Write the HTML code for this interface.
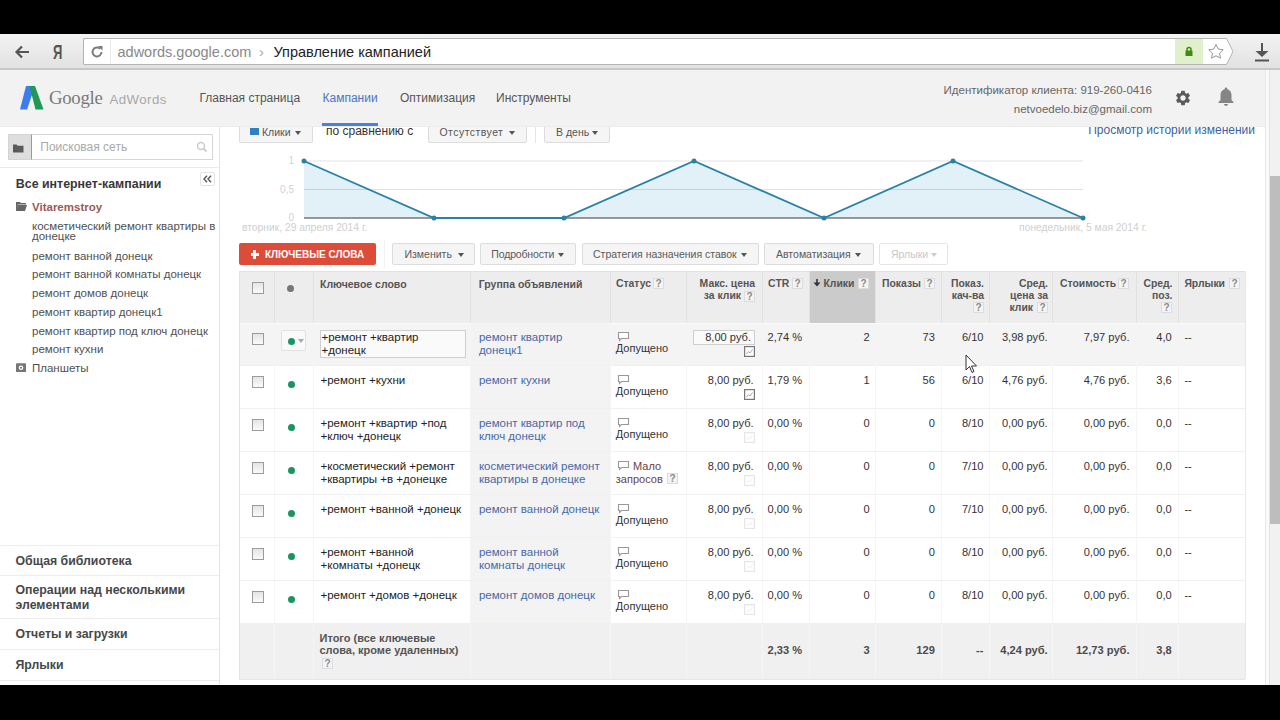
<!DOCTYPE html><html><head><meta charset="utf-8"><style>
html,body{margin:0;padding:0;width:1280px;height:720px;overflow:hidden;background:#fff;font-family:"Liberation Sans", sans-serif;}
.t{position:absolute;white-space:nowrap;}
.b{position:absolute;box-sizing:border-box;}
svg{position:absolute;}
</style></head><body>
<div class="b" style="left:0px;top:70px;width:1268px;height:615px;background:#fff;"></div>
<div class="b" style="left:239px;top:112px;width:74px;height:31px;background:#f5f5f5;border:1px solid #dcdcdc;border-radius:2px;"></div>
<div class="b" style="left:250px;top:128px;width:9px;height:7px;background:#2d82c4;"></div>
<div class="t" style="top:125.83px;font-size:10.5px;line-height:12.07px;color:#555;font-weight:normal;left:262.00px;">Клики</div>
<div class="b" style="left:295px;top:130.5px;width:0;height:0;border-left:3.5px solid transparent;border-right:3.5px solid transparent;border-top:4px solid #555;"></div>
<div class="t" style="top:125.44px;font-size:12px;line-height:13.8px;color:#333;font-weight:normal;left:326.00px;">по сравнению с</div>
<div class="b" style="left:428px;top:112px;width:99px;height:31px;background:#f5f5f5;border:1px solid #dcdcdc;border-radius:2px;"></div>
<div class="t" style="top:125.83px;font-size:10.5px;line-height:12.07px;color:#555;font-weight:normal;left:439.50px;letter-spacing:0.45px;">Отсутствует</div>
<div class="b" style="left:509px;top:130.5px;width:0;height:0;border-left:3.5px solid transparent;border-right:3.5px solid transparent;border-top:4px solid #555;"></div>
<div class="b" style="left:535px;top:112px;width:1px;height:31px;background:#e5e5e5;"></div>
<div class="b" style="left:544px;top:112px;width:66px;height:31px;background:#f5f5f5;border:1px solid #dcdcdc;border-radius:2px;"></div>
<div class="t" style="top:125.83px;font-size:10.5px;line-height:12.07px;color:#555;font-weight:normal;left:556.00px;">В день</div>
<div class="b" style="left:592.3px;top:130.5px;width:0;height:0;border-left:3.5px solid transparent;border-right:3.5px solid transparent;border-top:4px solid #555;"></div>
<div class="t" style="top:123.94px;font-size:12px;line-height:13.8px;color:#3c5fa0;font-weight:normal;right:25.00px;text-align:right;">Просмотр истории изменений</div>
<svg style="left:0;top:0" width="1280" height="720">
<polygon points="304,161 434,218 564,218 694,161 824,218 953,161 1083,218 304,218" fill="#e2f0f8"/>
<line x1="304" y1="161" x2="1083" y2="161" stroke="#000" stroke-opacity="0.11" stroke-width="1"/>
<line x1="304" y1="189.5" x2="1083" y2="189.5" stroke="#000" stroke-opacity="0.12" stroke-width="1.2"/>
<line x1="304" y1="218" x2="1083" y2="218" stroke="#777" stroke-width="1.5"/>
<polyline points="304,161 434,218 564,218 694,161 824,218 953,161 1083,218" fill="none" stroke="#2981a6" stroke-width="1.8"/>
<g fill="#2981a6"><circle cx="304" cy="161" r="2.5"/><circle cx="434" cy="218" r="2.5"/><circle cx="564" cy="218" r="2.5"/><circle cx="694" cy="161" r="2.5"/><circle cx="824" cy="218" r="2.5"/><circle cx="953" cy="161" r="2.5"/><circle cx="1083" cy="218" r="2.5"/></g>
</svg>
<div class="t" style="top:155.28px;font-size:10px;line-height:11.5px;color:#d2d2d2;font-weight:normal;right:986.00px;text-align:right;">1</div>
<div class="t" style="top:183.78px;font-size:10px;line-height:11.5px;color:#d2d2d2;font-weight:normal;right:986.00px;text-align:right;">0,5</div>
<div class="t" style="top:211.78px;font-size:10px;line-height:11.5px;color:#d2d2d2;font-weight:normal;right:986.00px;text-align:right;">0</div>
<div class="t" style="top:221.51px;font-size:10.3px;line-height:11.85px;color:#cfcfcf;font-weight:normal;left:242.00px;">вторник, 29 апреля 2014 г.</div>
<div class="t" style="top:221.51px;font-size:10.3px;line-height:11.85px;color:#cfcfcf;font-weight:normal;right:133.00px;text-align:right;">понедельник, 5 мая 2014 г.</div>
<div class="b" style="left:239px;top:243px;width:137px;height:22px;background:#dd4b39;border-radius:2px;"></div>
<div class="b" style="left:250.5px;top:253px;width:8.5px;height:3px;background:#fff;"></div>
<div class="b" style="left:253.25px;top:250.3px;width:3px;height:8.5px;background:#fff;"></div>
<div class="t" style="top:248.78px;font-size:10px;line-height:11.5px;color:#fff;font-weight:bold;left:265.00px;">КЛЮЧЕВЫЕ СЛОВА</div>
<div class="b" style="left:384px;top:240px;width:1px;height:28px;background:#f2f2f2;"></div>
<div class="b" style="left:392px;top:243px;width:83px;height:22px;background:#f5f5f5;border:1px solid #dcdcdc;border-radius:2px;"></div>
<div class="t" style="top:248.33px;font-size:10.5px;line-height:12.07px;color:#5a5a5a;font-weight:normal;left:404.50px;">Изменить</div>
<div class="b" style="left:457.5px;top:252.5px;width:0;height:0;border-left:3.5px solid transparent;border-right:3.5px solid transparent;border-top:4px solid #555;"></div>
<div class="b" style="left:480px;top:243px;width:96px;height:22px;background:#f5f5f5;border:1px solid #dcdcdc;border-radius:2px;"></div>
<div class="t" style="top:248.33px;font-size:10.5px;line-height:12.07px;color:#5a5a5a;font-weight:normal;left:491.30px;letter-spacing:-0.15px;">Подробности</div>
<div class="b" style="left:558px;top:252.5px;width:0;height:0;border-left:3.5px solid transparent;border-right:3.5px solid transparent;border-top:4px solid #555;"></div>
<div class="b" style="left:582px;top:243px;width:177px;height:22px;background:#f5f5f5;border:1px solid #dcdcdc;border-radius:2px;"></div>
<div class="t" style="top:248.33px;font-size:10.5px;line-height:12.07px;color:#5a5a5a;font-weight:normal;left:593.00px;">Стратегия назначения ставок</div>
<div class="b" style="left:740.8px;top:252.5px;width:0;height:0;border-left:3.5px solid transparent;border-right:3.5px solid transparent;border-top:4px solid #555;"></div>
<div class="b" style="left:764px;top:243px;width:110px;height:22px;background:#f5f5f5;border:1px solid #dcdcdc;border-radius:2px;"></div>
<div class="t" style="top:248.33px;font-size:10.5px;line-height:12.07px;color:#5a5a5a;font-weight:normal;left:776.00px;">Автоматизация</div>
<div class="b" style="left:855.3px;top:252.5px;width:0;height:0;border-left:3.5px solid transparent;border-right:3.5px solid transparent;border-top:4px solid #555;"></div>
<div class="b" style="left:879px;top:243px;width:69px;height:22px;background:#fff;border:1px solid #e5e5e5;border-radius:2px;"></div>
<div class="t" style="top:248.33px;font-size:10.5px;line-height:12.07px;color:#c8c8c8;font-weight:normal;left:891.00px;">Ярлыки</div>
<div class="b" style="left:930.5px;top:252.5px;width:0;height:0;border-left:3.5px solid transparent;border-right:3.5px solid transparent;border-top:4px solid #ccc;"></div>
<div class="b" style="left:239px;top:271px;width:1006px;height:52px;background:#ededed;border-top:1px solid #e2e2e2;"></div>
<div class="b" style="left:809px;top:271px;width:66px;height:52px;background:#cbcbcb;"></div>
<div class="b" style="left:274px;top:271px;width:1px;height:52px;background:#e2e2e2;"></div>
<div class="b" style="left:313px;top:271px;width:1px;height:52px;background:#e2e2e2;"></div>
<div class="b" style="left:470px;top:271px;width:1px;height:52px;background:#e2e2e2;"></div>
<div class="b" style="left:610px;top:271px;width:1px;height:52px;background:#e2e2e2;"></div>
<div class="b" style="left:686px;top:271px;width:1px;height:52px;background:#e2e2e2;"></div>
<div class="b" style="left:762px;top:271px;width:1px;height:52px;background:#e2e2e2;"></div>
<div class="b" style="left:809px;top:271px;width:1px;height:52px;background:#e2e2e2;"></div>
<div class="b" style="left:875px;top:271px;width:1px;height:52px;background:#e2e2e2;"></div>
<div class="b" style="left:941px;top:271px;width:1px;height:52px;background:#e2e2e2;"></div>
<div class="b" style="left:989px;top:271px;width:1px;height:52px;background:#e2e2e2;"></div>
<div class="b" style="left:1052px;top:271px;width:1px;height:52px;background:#e2e2e2;"></div>
<div class="b" style="left:1136px;top:271px;width:1px;height:52px;background:#e2e2e2;"></div>
<div class="b" style="left:1178px;top:271px;width:1px;height:52px;background:#e2e2e2;"></div>
<div class="b" style="left:239px;top:323px;width:1006px;height:356px;background:#fff;"></div>
<div class="b" style="left:239px;top:323px;width:1006px;height:43px;background:#f4f4f4;"></div>
<div class="b" style="left:239px;top:323px;width:1006px;height:1px;background:#fbfbfb;"></div>
<div class="b" style="left:470px;top:323px;width:140px;height:356px;background:#f3f3f3;"></div>
<div class="b" style="left:239px;top:624px;width:1006px;height:55px;background:#f0f0f0;"></div>
<div class="b" style="left:239px;top:365px;width:1006px;height:1px;background:#f0f0f0;"></div>
<div class="b" style="left:239px;top:408px;width:1006px;height:1px;background:#f0f0f0;"></div>
<div class="b" style="left:239px;top:451px;width:1006px;height:1px;background:#f0f0f0;"></div>
<div class="b" style="left:239px;top:494px;width:1006px;height:1px;background:#f0f0f0;"></div>
<div class="b" style="left:239px;top:537px;width:1006px;height:1px;background:#f0f0f0;"></div>
<div class="b" style="left:239px;top:580px;width:1006px;height:1px;background:#f0f0f0;"></div>
<div class="b" style="left:239px;top:623px;width:1006px;height:1px;background:#f0f0f0;"></div>
<div class="b" style="left:239px;top:679px;width:1006px;height:1px;background:#e6e6e6;"></div>
<div class="b" style="left:274px;top:323px;width:1px;height:356px;background:#f5f5f5;"></div>
<div class="b" style="left:313px;top:323px;width:1px;height:356px;background:#f5f5f5;"></div>
<div class="b" style="left:470px;top:323px;width:1px;height:356px;background:#f5f5f5;"></div>
<div class="b" style="left:610px;top:323px;width:1px;height:356px;background:#f5f5f5;"></div>
<div class="b" style="left:686px;top:323px;width:1px;height:356px;background:#f5f5f5;"></div>
<div class="b" style="left:762px;top:323px;width:1px;height:356px;background:#f5f5f5;"></div>
<div class="b" style="left:809px;top:323px;width:1px;height:356px;background:#f5f5f5;"></div>
<div class="b" style="left:875px;top:323px;width:1px;height:356px;background:#f5f5f5;"></div>
<div class="b" style="left:941px;top:323px;width:1px;height:356px;background:#f5f5f5;"></div>
<div class="b" style="left:989px;top:323px;width:1px;height:356px;background:#f5f5f5;"></div>
<div class="b" style="left:1052px;top:323px;width:1px;height:356px;background:#f5f5f5;"></div>
<div class="b" style="left:1136px;top:323px;width:1px;height:356px;background:#f5f5f5;"></div>
<div class="b" style="left:1178px;top:323px;width:1px;height:356px;background:#f5f5f5;"></div>
<div class="b" style="left:239px;top:271px;width:1px;height:408px;background:#e2e2e2;"></div>
<div class="b" style="left:1245px;top:271px;width:1px;height:408px;background:#e8e8e8;"></div>
<div class="b" style="left:252px;top:282px;width:12px;height:12px;border:1px solid #9c9c9c;background:linear-gradient(#e4e4e4,#fafafa);"></div>
<div class="b" style="left:286.5px;top:285px;width:7px;height:7px;border-radius:50%;background:#777;"></div>
<div class="t" style="top:278.33px;font-size:10.5px;line-height:12.07px;color:#555;font-weight:bold;left:320.00px;">Ключевое слово</div>
<div class="t" style="top:278.33px;font-size:10.5px;line-height:12.07px;color:#555;font-weight:bold;left:478.80px;">Группа объявлений</div>
<div class="t" style="top:278.42px;font-size:10.4px;line-height:11.96px;color:#555;font-weight:bold;left:616.00px;">Статус</div>
<div class="b" style="left:653px;top:278px;width:11px;height:11px;border:1px solid #dcdcdc;background:#f4f4f4;font-size:10px;line-height:10px;text-align:center;color:#8a8a8a;font-weight:bold;">?</div>
<div class="t" style="top:278.42px;font-size:10.4px;line-height:11.96px;color:#555;font-weight:bold;right:525.00px;text-align:right;">Макс. цена</div>
<div class="t" style="top:290.22px;font-size:10.4px;line-height:11.96px;color:#555;font-weight:bold;right:539.00px;text-align:right;">за клик</div>
<div class="b" style="left:744px;top:291px;width:11px;height:11px;border:1px solid #dcdcdc;background:#f4f4f4;font-size:10px;line-height:10px;text-align:center;color:#8a8a8a;font-weight:bold;">?</div>
<div class="t" style="top:278.42px;font-size:10.4px;line-height:11.96px;color:#555;font-weight:bold;left:768.00px;">CTR</div>
<div class="b" style="left:792px;top:278px;width:11px;height:11px;border:1px solid #dcdcdc;background:#f4f4f4;font-size:10px;line-height:10px;text-align:center;color:#8a8a8a;font-weight:bold;">?</div>
<svg style="left:813px;top:279px" width="8" height="8" viewBox="0 0 8 8"><path d="M4 0v6" stroke="#333" stroke-width="1.6"/><path d="M0.5 3.5L4 7.5 7.5 3.5z" fill="#333"/></svg>
<div class="t" style="top:278.42px;font-size:10.4px;line-height:11.96px;color:#555;font-weight:bold;left:823.50px;">Клики</div>
<div class="b" style="left:858px;top:278px;width:11px;height:11px;border:1px solid #dcdcdc;background:#f4f4f4;font-size:10px;line-height:10px;text-align:center;color:#8a8a8a;font-weight:bold;">?</div>
<div class="t" style="top:278.42px;font-size:10.4px;line-height:11.96px;color:#555;font-weight:bold;left:882.00px;">Показы</div>
<div class="b" style="left:924px;top:278px;width:11px;height:11px;border:1px solid #dcdcdc;background:#f4f4f4;font-size:10px;line-height:10px;text-align:center;color:#8a8a8a;font-weight:bold;">?</div>
<div class="t" style="top:278.42px;font-size:10.4px;line-height:11.96px;color:#555;font-weight:bold;right:296.00px;text-align:right;">Показ.</div>
<div class="t" style="top:290.22px;font-size:10.4px;line-height:11.96px;color:#555;font-weight:bold;right:296.00px;text-align:right;">кач-ва</div>
<div class="b" style="left:973px;top:302px;width:11px;height:11px;border:1px solid #dcdcdc;background:#f4f4f4;font-size:10px;line-height:10px;text-align:center;color:#8a8a8a;font-weight:bold;">?</div>
<div class="t" style="top:278.42px;font-size:10.4px;line-height:11.96px;color:#555;font-weight:bold;right:232.00px;text-align:right;">Сред.</div>
<div class="t" style="top:290.22px;font-size:10.4px;line-height:11.96px;color:#555;font-weight:bold;right:232.00px;text-align:right;">цена за</div>
<div class="t" style="top:301.92px;font-size:10.4px;line-height:11.96px;color:#555;font-weight:bold;right:247.00px;text-align:right;">клик</div>
<div class="b" style="left:1037px;top:302px;width:11px;height:11px;border:1px solid #dcdcdc;background:#f4f4f4;font-size:10px;line-height:10px;text-align:center;color:#8a8a8a;font-weight:bold;">?</div>
<div class="t" style="top:278.42px;font-size:10.4px;line-height:11.96px;color:#555;font-weight:bold;left:1060.00px;">Стоимость</div>
<div class="b" style="left:1118px;top:278px;width:11px;height:11px;border:1px solid #dcdcdc;background:#f4f4f4;font-size:10px;line-height:10px;text-align:center;color:#8a8a8a;font-weight:bold;">?</div>
<div class="t" style="top:278.42px;font-size:10.4px;line-height:11.96px;color:#555;font-weight:bold;right:107.50px;text-align:right;">Сред.</div>
<div class="t" style="top:290.22px;font-size:10.4px;line-height:11.96px;color:#555;font-weight:bold;right:107.50px;text-align:right;">поз.</div>
<div class="b" style="left:1161px;top:302px;width:11px;height:11px;border:1px solid #dcdcdc;background:#f4f4f4;font-size:10px;line-height:10px;text-align:center;color:#8a8a8a;font-weight:bold;">?</div>
<div class="t" style="top:278.42px;font-size:10.4px;line-height:11.96px;color:#555;font-weight:bold;left:1184.40px;">Ярлыки</div>
<div class="b" style="left:1229px;top:278px;width:11px;height:11px;border:1px solid #dcdcdc;background:#f4f4f4;font-size:10px;line-height:10px;text-align:center;color:#8a8a8a;font-weight:bold;">?</div>
<div class="b" style="left:252px;top:333px;width:12px;height:12px;border:1px solid #9c9c9c;background:linear-gradient(#e4e4e4,#fafafa);"></div>
<div class="b" style="left:281px;top:330px;width:25px;height:21px;border:1px solid #e2e2e2;background:#f9f9f9;border-radius:2px;"></div>
<div class="b" style="left:298px;top:339px;width:0;height:0;border-left:3.5px solid transparent;border-right:3.5px solid transparent;border-top:4px solid #aaa;"></div>
<div class="b" style="left:287.5px;top:337.5px;width:7px;height:7px;border-radius:50%;background:#1b9462;"></div>
<div class="b" style="left:320px;top:330px;width:146px;height:28px;border:1px solid #cfcfcf;background:#fafafa;"></div>
<div class="t" style="top:331.02px;font-size:11.5px;line-height:12.8px;color:#222;font-weight:normal;left:321.50px;">+ремонт +квартир<br>+донецк</div>
<div class="b" style="left:692.5px;top:330px;width:62px;height:15px;border:1px solid #cfcfcf;background:#fafafa;"></div>
<div class="t" style="top:331.17px;font-size:11.1px;line-height:12.76px;color:#333;font-weight:normal;right:529.00px;text-align:right;">8,00 руб.</div>
<svg style="left:744px;top:345.5px" width="11" height="11" viewBox="0 0 11 11"><rect x="0.6" y="0.6" width="9.8" height="9.8" fill="#fff" stroke="#777" stroke-width="1.2"/><path d="M2.5 8l2-2.5 1.5 1.5 2.5-3.5" fill="none" stroke="#aaa" stroke-width="1"/></svg>
<div class="t" style="top:331.02px;font-size:11.5px;line-height:12.8px;color:#4768a8;font-weight:normal;left:478.90px;">ремонт квартир<br>донецк1</div>
<svg style="left:617px;top:331px" width="13" height="11" viewBox="0 0 13 11"><path d="M1.5 1.5h10v6h-7l-2 2v-2h-1z" fill="#fff" stroke="#999" stroke-width="1.1"/></svg>
<div class="t" style="top:341.86px;font-size:11px;line-height:12.65px;color:#333;font-weight:normal;left:615.80px;">Допущено</div>
<div class="t" style="top:331.17px;font-size:11.1px;line-height:12.76px;color:#333;font-weight:normal;left:767.50px;">2,74 %</div>
<div class="t" style="top:331.17px;font-size:11.1px;line-height:12.76px;color:#333;font-weight:normal;right:410.30px;text-align:right;">2</div>
<div class="t" style="top:331.17px;font-size:11.1px;line-height:12.76px;color:#333;font-weight:normal;right:345.20px;text-align:right;">73</div>
<div class="t" style="top:331.17px;font-size:11.1px;line-height:12.76px;color:#333;font-weight:normal;right:296.50px;text-align:right;">6/10</div>
<div class="t" style="top:331.17px;font-size:11.1px;line-height:12.76px;color:#333;font-weight:normal;right:232.30px;text-align:right;">3,98 руб.</div>
<div class="t" style="top:331.17px;font-size:11.1px;line-height:12.76px;color:#333;font-weight:normal;right:150.50px;text-align:right;">7,97 руб.</div>
<div class="t" style="top:331.17px;font-size:11.1px;line-height:12.76px;color:#333;font-weight:normal;right:108.30px;text-align:right;">4,0</div>
<div class="t" style="top:331.17px;font-size:11.1px;line-height:12.76px;color:#333;font-weight:normal;left:1184.40px;">--</div>
<div class="b" style="left:252px;top:376px;width:12px;height:12px;border:1px solid #9c9c9c;background:linear-gradient(#e4e4e4,#fafafa);"></div>
<div class="b" style="left:287.5px;top:380.5px;width:7px;height:7px;border-radius:50%;background:#1b9462;"></div>
<div class="t" style="top:374.02px;font-size:11.5px;line-height:12.8px;color:#222;font-weight:normal;left:320.50px;">+ремонт +кухни</div>
<div class="t" style="top:374.17px;font-size:11.1px;line-height:12.76px;color:#333;font-weight:normal;right:526.40px;text-align:right;">8,00 руб.</div>
<svg style="left:744px;top:388.5px" width="11" height="11" viewBox="0 0 11 11"><rect x="0.6" y="0.6" width="9.8" height="9.8" fill="#fff" stroke="#777" stroke-width="1.2"/><path d="M2.5 8l2-2.5 1.5 1.5 2.5-3.5" fill="none" stroke="#aaa" stroke-width="1"/></svg>
<div class="t" style="top:374.02px;font-size:11.5px;line-height:12.8px;color:#4768a8;font-weight:normal;left:478.90px;">ремонт кухни</div>
<svg style="left:617px;top:374px" width="13" height="11" viewBox="0 0 13 11"><path d="M1.5 1.5h10v6h-7l-2 2v-2h-1z" fill="#fff" stroke="#999" stroke-width="1.1"/></svg>
<div class="t" style="top:384.86px;font-size:11px;line-height:12.65px;color:#333;font-weight:normal;left:615.80px;">Допущено</div>
<div class="t" style="top:374.17px;font-size:11.1px;line-height:12.76px;color:#333;font-weight:normal;left:767.50px;">1,79 %</div>
<div class="t" style="top:374.17px;font-size:11.1px;line-height:12.76px;color:#333;font-weight:normal;right:410.30px;text-align:right;">1</div>
<div class="t" style="top:374.17px;font-size:11.1px;line-height:12.76px;color:#333;font-weight:normal;right:345.20px;text-align:right;">56</div>
<div class="t" style="top:374.17px;font-size:11.1px;line-height:12.76px;color:#333;font-weight:normal;right:296.50px;text-align:right;">6/10</div>
<div class="t" style="top:374.17px;font-size:11.1px;line-height:12.76px;color:#333;font-weight:normal;right:232.30px;text-align:right;">4,76 руб.</div>
<div class="t" style="top:374.17px;font-size:11.1px;line-height:12.76px;color:#333;font-weight:normal;right:150.50px;text-align:right;">4,76 руб.</div>
<div class="t" style="top:374.17px;font-size:11.1px;line-height:12.76px;color:#333;font-weight:normal;right:108.30px;text-align:right;">3,6</div>
<div class="t" style="top:374.17px;font-size:11.1px;line-height:12.76px;color:#333;font-weight:normal;left:1184.40px;">--</div>
<div class="b" style="left:252px;top:419px;width:12px;height:12px;border:1px solid #9c9c9c;background:linear-gradient(#e4e4e4,#fafafa);"></div>
<div class="b" style="left:287.5px;top:423.5px;width:7px;height:7px;border-radius:50%;background:#1b9462;"></div>
<div class="t" style="top:417.02px;font-size:11.5px;line-height:12.8px;color:#222;font-weight:normal;left:320.50px;">+ремонт +квартир +под<br>+ключ +донецк</div>
<div class="t" style="top:417.17px;font-size:11.1px;line-height:12.76px;color:#333;font-weight:normal;right:526.40px;text-align:right;">8,00 руб.</div>
<svg style="left:744px;top:431.5px" width="11" height="11" viewBox="0 0 11 11"><rect x="0.6" y="0.6" width="9.8" height="9.8" fill="#fff" stroke="#e6e6e6" stroke-width="1.2"/><path d="M2.5 8l2-2.5 1.5 1.5 2.5-3.5" fill="none" stroke="#eee" stroke-width="1"/></svg>
<div class="t" style="top:417.02px;font-size:11.5px;line-height:12.8px;color:#4768a8;font-weight:normal;left:478.90px;">ремонт квартир под<br>ключ донецк</div>
<svg style="left:617px;top:417px" width="13" height="11" viewBox="0 0 13 11"><path d="M1.5 1.5h10v6h-7l-2 2v-2h-1z" fill="#fff" stroke="#999" stroke-width="1.1"/></svg>
<div class="t" style="top:427.86px;font-size:11px;line-height:12.65px;color:#333;font-weight:normal;left:615.80px;">Допущено</div>
<div class="t" style="top:417.17px;font-size:11.1px;line-height:12.76px;color:#333;font-weight:normal;left:767.50px;">0,00 %</div>
<div class="t" style="top:417.17px;font-size:11.1px;line-height:12.76px;color:#333;font-weight:normal;right:410.30px;text-align:right;">0</div>
<div class="t" style="top:417.17px;font-size:11.1px;line-height:12.76px;color:#333;font-weight:normal;right:345.20px;text-align:right;">0</div>
<div class="t" style="top:417.17px;font-size:11.1px;line-height:12.76px;color:#333;font-weight:normal;right:296.50px;text-align:right;">8/10</div>
<div class="t" style="top:417.17px;font-size:11.1px;line-height:12.76px;color:#333;font-weight:normal;right:232.30px;text-align:right;">0,00 руб.</div>
<div class="t" style="top:417.17px;font-size:11.1px;line-height:12.76px;color:#333;font-weight:normal;right:150.50px;text-align:right;">0,00 руб.</div>
<div class="t" style="top:417.17px;font-size:11.1px;line-height:12.76px;color:#333;font-weight:normal;right:108.30px;text-align:right;">0,0</div>
<div class="t" style="top:417.17px;font-size:11.1px;line-height:12.76px;color:#333;font-weight:normal;left:1184.40px;">--</div>
<div class="b" style="left:252px;top:462px;width:12px;height:12px;border:1px solid #9c9c9c;background:linear-gradient(#e4e4e4,#fafafa);"></div>
<div class="b" style="left:287.5px;top:466.5px;width:7px;height:7px;border-radius:50%;background:#1b9462;"></div>
<div class="t" style="top:460.02px;font-size:11.5px;line-height:12.8px;color:#222;font-weight:normal;left:320.50px;">+косметический +ремонт<br>+квартиры +в +донецке</div>
<div class="t" style="top:460.17px;font-size:11.1px;line-height:12.76px;color:#333;font-weight:normal;right:526.40px;text-align:right;">8,00 руб.</div>
<svg style="left:744px;top:474.5px" width="11" height="11" viewBox="0 0 11 11"><rect x="0.6" y="0.6" width="9.8" height="9.8" fill="#fff" stroke="#e6e6e6" stroke-width="1.2"/><path d="M2.5 8l2-2.5 1.5 1.5 2.5-3.5" fill="none" stroke="#eee" stroke-width="1"/></svg>
<div class="t" style="top:460.02px;font-size:11.5px;line-height:12.8px;color:#4768a8;font-weight:normal;left:478.90px;">косметический ремонт<br>квартиры в донецке</div>
<svg style="left:617px;top:460px" width="13" height="11" viewBox="0 0 13 11"><path d="M1.5 1.5h10v6h-7l-2 2v-2h-1z" fill="#fff" stroke="#999" stroke-width="1.1"/></svg>
<div class="t" style="top:460.26px;font-size:11px;line-height:12.65px;color:#6e4242;font-weight:normal;left:633.00px;">Мало</div>
<div class="t" style="top:472.86px;font-size:11px;line-height:12.65px;color:#6e4242;font-weight:normal;left:615.80px;">запросов</div>
<div class="b" style="left:667px;top:473px;width:11px;height:11px;border:1px solid #dcdcdc;background:#f4f4f4;font-size:10px;line-height:10px;text-align:center;color:#8a8a8a;font-weight:bold;">?</div>
<div class="t" style="top:460.17px;font-size:11.1px;line-height:12.76px;color:#333;font-weight:normal;left:767.50px;">0,00 %</div>
<div class="t" style="top:460.17px;font-size:11.1px;line-height:12.76px;color:#333;font-weight:normal;right:410.30px;text-align:right;">0</div>
<div class="t" style="top:460.17px;font-size:11.1px;line-height:12.76px;color:#333;font-weight:normal;right:345.20px;text-align:right;">0</div>
<div class="t" style="top:460.17px;font-size:11.1px;line-height:12.76px;color:#333;font-weight:normal;right:296.50px;text-align:right;">7/10</div>
<div class="t" style="top:460.17px;font-size:11.1px;line-height:12.76px;color:#333;font-weight:normal;right:232.30px;text-align:right;">0,00 руб.</div>
<div class="t" style="top:460.17px;font-size:11.1px;line-height:12.76px;color:#333;font-weight:normal;right:150.50px;text-align:right;">0,00 руб.</div>
<div class="t" style="top:460.17px;font-size:11.1px;line-height:12.76px;color:#333;font-weight:normal;right:108.30px;text-align:right;">0,0</div>
<div class="t" style="top:460.17px;font-size:11.1px;line-height:12.76px;color:#333;font-weight:normal;left:1184.40px;">--</div>
<div class="b" style="left:252px;top:505px;width:12px;height:12px;border:1px solid #9c9c9c;background:linear-gradient(#e4e4e4,#fafafa);"></div>
<div class="b" style="left:287.5px;top:509.5px;width:7px;height:7px;border-radius:50%;background:#1b9462;"></div>
<div class="t" style="top:503.02px;font-size:11.5px;line-height:12.8px;color:#222;font-weight:normal;left:320.50px;">+ремонт +ванной +донецк</div>
<div class="t" style="top:503.17px;font-size:11.1px;line-height:12.76px;color:#333;font-weight:normal;right:526.40px;text-align:right;">8,00 руб.</div>
<svg style="left:744px;top:517.5px" width="11" height="11" viewBox="0 0 11 11"><rect x="0.6" y="0.6" width="9.8" height="9.8" fill="#fff" stroke="#e6e6e6" stroke-width="1.2"/><path d="M2.5 8l2-2.5 1.5 1.5 2.5-3.5" fill="none" stroke="#eee" stroke-width="1"/></svg>
<div class="t" style="top:503.02px;font-size:11.5px;line-height:12.8px;color:#4768a8;font-weight:normal;left:478.90px;">ремонт ванной донецк</div>
<svg style="left:617px;top:503px" width="13" height="11" viewBox="0 0 13 11"><path d="M1.5 1.5h10v6h-7l-2 2v-2h-1z" fill="#fff" stroke="#999" stroke-width="1.1"/></svg>
<div class="t" style="top:513.86px;font-size:11px;line-height:12.65px;color:#333;font-weight:normal;left:615.80px;">Допущено</div>
<div class="t" style="top:503.17px;font-size:11.1px;line-height:12.76px;color:#333;font-weight:normal;left:767.50px;">0,00 %</div>
<div class="t" style="top:503.17px;font-size:11.1px;line-height:12.76px;color:#333;font-weight:normal;right:410.30px;text-align:right;">0</div>
<div class="t" style="top:503.17px;font-size:11.1px;line-height:12.76px;color:#333;font-weight:normal;right:345.20px;text-align:right;">0</div>
<div class="t" style="top:503.17px;font-size:11.1px;line-height:12.76px;color:#333;font-weight:normal;right:296.50px;text-align:right;">7/10</div>
<div class="t" style="top:503.17px;font-size:11.1px;line-height:12.76px;color:#333;font-weight:normal;right:232.30px;text-align:right;">0,00 руб.</div>
<div class="t" style="top:503.17px;font-size:11.1px;line-height:12.76px;color:#333;font-weight:normal;right:150.50px;text-align:right;">0,00 руб.</div>
<div class="t" style="top:503.17px;font-size:11.1px;line-height:12.76px;color:#333;font-weight:normal;right:108.30px;text-align:right;">0,0</div>
<div class="t" style="top:503.17px;font-size:11.1px;line-height:12.76px;color:#333;font-weight:normal;left:1184.40px;">--</div>
<div class="b" style="left:252px;top:548px;width:12px;height:12px;border:1px solid #9c9c9c;background:linear-gradient(#e4e4e4,#fafafa);"></div>
<div class="b" style="left:287.5px;top:552.5px;width:7px;height:7px;border-radius:50%;background:#1b9462;"></div>
<div class="t" style="top:546.02px;font-size:11.5px;line-height:12.8px;color:#222;font-weight:normal;left:320.50px;">+ремонт +ванной<br>+комнаты +донецк</div>
<div class="t" style="top:546.17px;font-size:11.1px;line-height:12.76px;color:#333;font-weight:normal;right:526.40px;text-align:right;">8,00 руб.</div>
<svg style="left:744px;top:560.5px" width="11" height="11" viewBox="0 0 11 11"><rect x="0.6" y="0.6" width="9.8" height="9.8" fill="#fff" stroke="#e6e6e6" stroke-width="1.2"/><path d="M2.5 8l2-2.5 1.5 1.5 2.5-3.5" fill="none" stroke="#eee" stroke-width="1"/></svg>
<div class="t" style="top:546.02px;font-size:11.5px;line-height:12.8px;color:#4768a8;font-weight:normal;left:478.90px;">ремонт ванной<br>комнаты донецк</div>
<svg style="left:617px;top:546px" width="13" height="11" viewBox="0 0 13 11"><path d="M1.5 1.5h10v6h-7l-2 2v-2h-1z" fill="#fff" stroke="#999" stroke-width="1.1"/></svg>
<div class="t" style="top:556.86px;font-size:11px;line-height:12.65px;color:#333;font-weight:normal;left:615.80px;">Допущено</div>
<div class="t" style="top:546.17px;font-size:11.1px;line-height:12.76px;color:#333;font-weight:normal;left:767.50px;">0,00 %</div>
<div class="t" style="top:546.17px;font-size:11.1px;line-height:12.76px;color:#333;font-weight:normal;right:410.30px;text-align:right;">0</div>
<div class="t" style="top:546.17px;font-size:11.1px;line-height:12.76px;color:#333;font-weight:normal;right:345.20px;text-align:right;">0</div>
<div class="t" style="top:546.17px;font-size:11.1px;line-height:12.76px;color:#333;font-weight:normal;right:296.50px;text-align:right;">8/10</div>
<div class="t" style="top:546.17px;font-size:11.1px;line-height:12.76px;color:#333;font-weight:normal;right:232.30px;text-align:right;">0,00 руб.</div>
<div class="t" style="top:546.17px;font-size:11.1px;line-height:12.76px;color:#333;font-weight:normal;right:150.50px;text-align:right;">0,00 руб.</div>
<div class="t" style="top:546.17px;font-size:11.1px;line-height:12.76px;color:#333;font-weight:normal;right:108.30px;text-align:right;">0,0</div>
<div class="t" style="top:546.17px;font-size:11.1px;line-height:12.76px;color:#333;font-weight:normal;left:1184.40px;">--</div>
<div class="b" style="left:252px;top:591px;width:12px;height:12px;border:1px solid #9c9c9c;background:linear-gradient(#e4e4e4,#fafafa);"></div>
<div class="b" style="left:287.5px;top:595.5px;width:7px;height:7px;border-radius:50%;background:#1b9462;"></div>
<div class="t" style="top:589.02px;font-size:11.5px;line-height:12.8px;color:#222;font-weight:normal;left:320.50px;">+ремонт +домов +донецк</div>
<div class="t" style="top:589.17px;font-size:11.1px;line-height:12.76px;color:#333;font-weight:normal;right:526.40px;text-align:right;">8,00 руб.</div>
<svg style="left:744px;top:603.5px" width="11" height="11" viewBox="0 0 11 11"><rect x="0.6" y="0.6" width="9.8" height="9.8" fill="#fff" stroke="#e6e6e6" stroke-width="1.2"/><path d="M2.5 8l2-2.5 1.5 1.5 2.5-3.5" fill="none" stroke="#eee" stroke-width="1"/></svg>
<div class="t" style="top:589.02px;font-size:11.5px;line-height:12.8px;color:#4768a8;font-weight:normal;left:478.90px;">ремонт домов донецк</div>
<svg style="left:617px;top:589px" width="13" height="11" viewBox="0 0 13 11"><path d="M1.5 1.5h10v6h-7l-2 2v-2h-1z" fill="#fff" stroke="#999" stroke-width="1.1"/></svg>
<div class="t" style="top:599.86px;font-size:11px;line-height:12.65px;color:#333;font-weight:normal;left:615.80px;">Допущено</div>
<div class="t" style="top:589.17px;font-size:11.1px;line-height:12.76px;color:#333;font-weight:normal;left:767.50px;">0,00 %</div>
<div class="t" style="top:589.17px;font-size:11.1px;line-height:12.76px;color:#333;font-weight:normal;right:410.30px;text-align:right;">0</div>
<div class="t" style="top:589.17px;font-size:11.1px;line-height:12.76px;color:#333;font-weight:normal;right:345.20px;text-align:right;">0</div>
<div class="t" style="top:589.17px;font-size:11.1px;line-height:12.76px;color:#333;font-weight:normal;right:296.50px;text-align:right;">8/10</div>
<div class="t" style="top:589.17px;font-size:11.1px;line-height:12.76px;color:#333;font-weight:normal;right:232.30px;text-align:right;">0,00 руб.</div>
<div class="t" style="top:589.17px;font-size:11.1px;line-height:12.76px;color:#333;font-weight:normal;right:150.50px;text-align:right;">0,00 руб.</div>
<div class="t" style="top:589.17px;font-size:11.1px;line-height:12.76px;color:#333;font-weight:normal;right:108.30px;text-align:right;">0,0</div>
<div class="t" style="top:589.17px;font-size:11.1px;line-height:12.76px;color:#333;font-weight:normal;left:1184.40px;">--</div>
<div class="t" style="top:631.59px;font-size:11px;line-height:12.8px;color:#555;font-weight:bold;left:319.50px;">Итого (все ключевые<br>слова, кроме удаленных)</div>
<div class="b" style="left:322px;top:658px;width:11px;height:11px;border:1px solid #dcdcdc;background:#f4f4f4;font-size:10px;line-height:10px;text-align:center;color:#8a8a8a;font-weight:bold;">?</div>
<div class="t" style="top:644.27px;font-size:11.1px;line-height:12.76px;color:#4c4c4c;font-weight:bold;left:767.50px;">2,33 %</div>
<div class="t" style="top:644.27px;font-size:11.1px;line-height:12.76px;color:#4c4c4c;font-weight:bold;right:410.30px;text-align:right;">3</div>
<div class="t" style="top:644.27px;font-size:11.1px;line-height:12.76px;color:#4c4c4c;font-weight:bold;right:345.20px;text-align:right;">129</div>
<div class="t" style="top:644.27px;font-size:11.1px;line-height:12.76px;color:#4c4c4c;font-weight:bold;right:296.50px;text-align:right;">--</div>
<div class="t" style="top:644.27px;font-size:11.1px;line-height:12.76px;color:#4c4c4c;font-weight:bold;right:232.30px;text-align:right;">4,24 руб.</div>
<div class="t" style="top:644.27px;font-size:11.1px;line-height:12.76px;color:#4c4c4c;font-weight:bold;right:150.50px;text-align:right;">12,73 руб.</div>
<div class="t" style="top:644.27px;font-size:11.1px;line-height:12.76px;color:#4c4c4c;font-weight:bold;right:108.30px;text-align:right;">3,8</div>
<svg style="left:965px;top:354px" width="14" height="20" viewBox="0 0 14 20"><path d="M1 1v15l3.5-3.5 2.5 6 2-1-2.5-5.5h5z" fill="#fff" stroke="#333" stroke-width="1"/></svg>
<div class="b" style="left:0px;top:126px;width:220px;height:559px;background:#fff;border-right:1px solid #e3e3e3;"></div>
<div class="b" style="left:8px;top:134px;width:24px;height:26px;background:#dedede;border:1px solid #d4d4d4;border-right:none;"></div>
<svg style="left:13px;top:143.5px" width="11" height="9" viewBox="0 0 11 9"><path d="M0 0.5h3.5l1.2 1.3h5.8v6.7h-10.5z" fill="#5a5a5a"/></svg>
<div class="b" style="left:31px;top:134px;width:182px;height:26px;background:#fff;border:1px solid #d6d6d6;border-left:1px solid #9a9a9a;"></div>
<div class="t" style="top:140.94px;font-size:12px;line-height:13.8px;color:#aaa;font-weight:normal;left:40.30px;">Поисковая сеть</div>
<svg style="left:196px;top:141px" width="12" height="12" viewBox="0 0 12 12"><circle cx="5" cy="5" r="3.5" fill="none" stroke="#ccc" stroke-width="1.5"/><path d="M7.5 7.5l3 3" stroke="#ccc" stroke-width="1.8"/></svg>
<div class="b" style="left:0px;top:167px;width:219px;height:1px;background:#ebebeb;"></div>
<div class="t" style="top:176.57px;font-size:12.4px;line-height:14.26px;color:#383838;font-weight:bold;left:15.80px;">Все интернет-кампании</div>
<div class="b" style="left:200px;top:172px;width:15px;height:14px;border:1px solid #e2e2e2;background:#fff;border-radius:2px;"></div>
<svg style="left:203px;top:175px" width="9" height="8" viewBox="0 0 9 8"><path d="M4 0.8L1 4l3 3.2M8 0.8L5 4l3 3.2" fill="none" stroke="#555" stroke-width="1.4"/></svg>
<svg style="left:16px;top:202.3px" width="11" height="9" viewBox="0 0 11 9"><path d="M0 0h4l1 1h5v1.5h-8l-2 6.5z M2 3h9l-2 6h-9z" fill="#666"/></svg>
<div class="t" style="top:200.81px;font-size:11.5px;line-height:13.22px;color:#9c5a54;font-weight:bold;left:32.00px;">Vitaremstroy</div>
<div class="t" style="top:222.27px;font-size:11.5px;line-height:9.9px;color:#505050;font-weight:normal;left:32.00px;">косметический ремонт квартиры в<br>донецке</div>
<div class="t" style="top:249.71px;font-size:11.5px;line-height:13.22px;color:#505050;font-weight:normal;left:32.00px;">ремонт ванной донецк</div>
<div class="t" style="top:268.46px;font-size:11.5px;line-height:13.22px;color:#505050;font-weight:normal;left:32.00px;">ремонт ванной комнаты донецк</div>
<div class="t" style="top:287.21px;font-size:11.5px;line-height:13.22px;color:#505050;font-weight:normal;left:32.00px;">ремонт домов донецк</div>
<div class="t" style="top:305.96px;font-size:11.5px;line-height:13.22px;color:#505050;font-weight:normal;left:32.00px;">ремонт квартир донецк1</div>
<div class="t" style="top:324.71px;font-size:11.5px;line-height:13.22px;color:#505050;font-weight:normal;left:32.00px;">ремонт квартир под ключ донецк</div>
<div class="t" style="top:343.46px;font-size:11.5px;line-height:13.22px;color:#505050;font-weight:normal;left:32.00px;">ремонт кухни</div>
<svg style="left:16px;top:362.7px" width="10" height="9.5" viewBox="0 0 11 10"><rect x="0" y="0" width="11" height="10" rx="1" fill="#777"/><circle cx="5.5" cy="5" r="2.5" fill="#fff"/><circle cx="5.5" cy="5" r="1.2" fill="#777"/></svg>
<div class="t" style="top:362.11px;font-size:11.5px;line-height:13.22px;color:#505050;font-weight:normal;left:32.00px;">Планшеты</div>
<div class="b" style="left:0px;top:545px;width:219px;height:1px;background:#ececec;"></div>
<div class="b" style="left:0px;top:575px;width:219px;height:1px;background:#ececec;"></div>
<div class="b" style="left:0px;top:618px;width:219px;height:1px;background:#ececec;"></div>
<div class="b" style="left:0px;top:649px;width:219px;height:1px;background:#ececec;"></div>
<div class="b" style="left:0px;top:680px;width:219px;height:1px;background:#ececec;"></div>
<div class="t" style="top:554.47px;font-size:12.3px;line-height:14.14px;color:#474747;font-weight:bold;left:15.50px;">Общая библиотека</div>
<div class="t" style="top:582.57px;font-size:12.3px;line-height:14.14px;color:#474747;font-weight:bold;left:15.50px;">Операции над несколькими</div>
<div class="t" style="top:598.37px;font-size:12.3px;line-height:14.14px;color:#474747;font-weight:bold;left:15.50px;">элементами</div>
<div class="t" style="top:627.27px;font-size:12.3px;line-height:14.14px;color:#474747;font-weight:bold;left:15.50px;">Отчеты и загрузки</div>
<div class="t" style="top:658.37px;font-size:12.3px;line-height:14.14px;color:#474747;font-weight:bold;left:15.50px;">Ярлыки</div>
<div class="b" style="left:0px;top:70px;width:1265px;height:56px;background:#f2f2f2;box-shadow:0 1px 0 #ececec;"></div>
<svg style="left:19px;top:85px" width="26" height="26" viewBox="0 0 26 26">
<path d="M7 1h9l-8 23.5h-7z" fill="#3b7ded"/>
<path d="M10.5 1h5.5l8.5 23.5h-8z" fill="#1f9955"/>
</svg>
<div class="t" style="top:86.58px;font-size:18.8px;line-height:21.62px;color:#7a7a7a;font-weight:normal;left:49.00px;font-family:'Liberation Serif',serif;letter-spacing:-0.3px;">Google</div>
<div class="t" style="top:91.54px;font-size:13.2px;line-height:15.18px;color:#a8a8a8;font-weight:normal;left:109.40px;letter-spacing:0.5px;">AdWords</div>
<div class="t" style="top:92.34px;font-size:12px;line-height:13.8px;color:#555;font-weight:normal;left:199.40px;">Главная страница</div>
<div class="t" style="top:92.34px;font-size:12px;line-height:13.8px;color:#4a74c4;font-weight:normal;left:322.50px;">Кампании</div>
<div class="b" style="left:322px;top:123px;width:56px;height:3px;background:#4d7de0;"></div>
<div class="t" style="top:92.34px;font-size:12px;line-height:13.8px;color:#555;font-weight:normal;left:400.00px;">Оптимизация</div>
<div class="t" style="top:92.34px;font-size:12px;line-height:13.8px;color:#555;font-weight:normal;left:496.00px;">Инструменты</div>
<div class="t" style="top:84.41px;font-size:11.5px;line-height:13.22px;color:#666;font-weight:normal;right:128.00px;text-align:right;">Идентификатор клиента: 919-260-0416</div>
<div class="t" style="top:103.11px;font-size:11.5px;line-height:13.22px;color:#666;font-weight:normal;right:128.00px;text-align:right;">netvoedelo.biz@gmail.com</div>
<svg style="left:1174px;top:89px" width="18" height="18" viewBox="0 0 24 24"><path fill="#5a5a5a" d="M19.14 12.94c.04-.3.06-.61.06-.94 0-.32-.02-.64-.07-.94l2.03-1.58a.49.49 0 0 0 .12-.61l-1.92-3.32a.488.488 0 0 0-.59-.22l-2.39.96c-.5-.38-1.03-.7-1.62-.94l-.36-2.54a.484.484 0 0 0-.48-.41h-3.84c-.24 0-.43.17-.47.41l-.36 2.54c-.59.24-1.13.57-1.62.94l-2.39-.96c-.22-.08-.47 0-.59.22L2.74 8.87c-.12.21-.08.47.12.61l2.03 1.58c-.05.3-.09.63-.09.94s.02.64.07.94l-2.03 1.58a.49.49 0 0 0-.12.61l1.92 3.32c.12.22.37.29.59.22l2.39-.96c.5.38 1.03.7 1.62.94l.36 2.54c.05.24.24.41.48.41h3.84c.24 0 .44-.17.47-.41l.36-2.54c.59-.24 1.13-.56 1.62-.94l2.39.96c.22.08.47 0 .59-.22l1.92-3.32c.12-.22.07-.47-.12-.61l-2.01-1.58zM12 15.6c-1.98 0-3.6-1.62-3.6-3.6s1.62-3.6 3.6-3.6 3.6 1.62 3.6 3.6-1.62 3.6-3.6 3.6z"/></svg>
<svg style="left:1217px;top:86px" width="18" height="21" viewBox="0 0 18 21"><path fill="#858585" d="M9 1.5c.8 0 1.3.6 1.3 1.3v.5c2.6.6 4.2 2.9 4.2 5.7v5l2 2v1H1.5v-1l2-2v-5c0-2.8 1.6-5.1 4.2-5.7v-.5c0-.7.5-1.3 1.3-1.3z M7 18h4c0 1.1-.9 2-2 2s-2-.9-2-2z"/></svg>
<div class="b" style="left:0px;top:0px;width:1280px;height:34px;background:#000;"></div>
<div class="b" style="left:0px;top:34px;width:1280px;height:36px;background:linear-gradient(#f3f3f3,#e2e2e2);border-bottom:2px solid #c8c8c8;"></div>
<svg style="left:14px;top:45px" width="16" height="14" viewBox="0 0 16 14"><path d="M15 7H3M8 1.5L2.5 7 8 12.5" fill="none" stroke="#555" stroke-width="2.2"/></svg>
<div class="t" style="top:40.45px;font-size:21px;line-height:24.15px;color:#555;font-weight:bold;left:52.50px;transform:scaleX(0.62);transform-origin:left;">Я</div>
<div class="b" style="left:83px;top:38px;width:1143px;height:27px;background:#fff;border:1px solid #b4b4b4;border-right:none;border-radius:2px 0 0 2px;"></div>
<svg style="left:1225px;top:38px" width="10" height="27" viewBox="0 0 10 27"><path d="M0 0.5h1.5l6.5 13-6.5 13h-1.5z" fill="#fff"/><path d="M0 0.5h1.5l6.5 13-6.5 13h-1.5" fill="none" stroke="#b4b4b4" stroke-width="1"/></svg>
<div class="b" style="left:110px;top:39px;width:1px;height:25px;background:#e8e8e8;"></div>
<svg style="left:89px;top:44px" width="16" height="16" viewBox="0 0 16 16"><path d="M12.5 8a4.5 4.5 0 1 1-1.3-3.2" fill="none" stroke="#7a7a7a" stroke-width="1.9"/><path d="M9 2h4.5v4.5z" fill="#7a7a7a"/></svg>
<div class="t" style="top:43.84px;font-size:14.5px;line-height:16.67px;color:#888;font-weight:normal;left:117.50px;">adwords.google.com</div>
<div class="t" style="top:43.84px;font-size:14.5px;line-height:16.67px;color:#aaa;font-weight:normal;left:259.00px;">&rsaquo;</div>
<div class="t" style="top:43.84px;font-size:14.5px;line-height:16.67px;color:#222;font-weight:normal;left:273.50px;">Управление кампанией</div>
<div class="b" style="left:1175px;top:39px;width:28px;height:25px;background:#e0f0cc;"></div>
<svg style="left:1184px;top:46px" width="10" height="11" viewBox="0 0 10 11"><path d="M3 5V3.5a2 2 0 0 1 4 0V5" fill="none" stroke="#3f8a10" stroke-width="1.5"/><rect x="1.5" y="4.5" width="7" height="5.5" rx="0.5" fill="#3f8a10"/></svg>
<svg style="left:1207px;top:43px" width="18" height="17" viewBox="0 0 18 17"><path d="M9 1.5l2.2 4.6 5 .6-3.7 3.5 1 5L9 12.8l-4.5 2.4 1-5L1.8 6.7l5-.6z" fill="#fff" stroke="#999" stroke-width="1"/></svg>
<svg style="left:1254px;top:42px" width="16" height="20" viewBox="0 0 16 20"><path d="M8 1v11" stroke="#555" stroke-width="2"/><path d="M1.5 9L8 15l6.5-6z" fill="#555"/><rect x="1" y="17.5" width="14" height="2" fill="#555"/></svg>
<div class="b" style="left:1265px;top:70px;width:4px;height:615px;background:#fafafa;border-left:1px solid #e8e8e8;"></div>
<div class="b" style="left:1269px;top:70px;width:11px;height:615px;background:#f1f1f1;border-left:1px solid #e4e4e4;"></div>
<div class="b" style="left:1270px;top:176px;width:10px;height:348px;background:#bdbdbd;"></div>
<div class="b" style="left:0px;top:685px;width:1280px;height:35px;background:#000;"></div>
</body></html>
